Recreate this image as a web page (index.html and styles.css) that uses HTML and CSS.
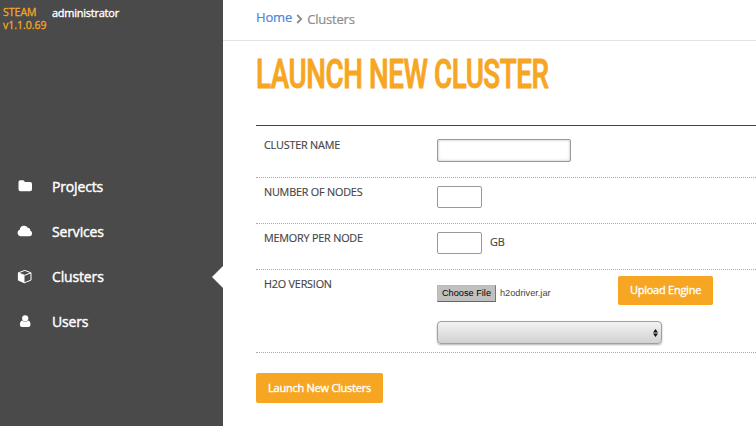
FILE: index.html
```html
<!DOCTYPE html>
<html lang="en">
<head>
<meta charset="utf-8">
<title>Steam - Launch New Cluster</title>
<link rel="stylesheet" href="styles.css">
</head>
<body>
<div class="app">
  <aside class="sidebar">
    <header class="brand">
      <div class="version">STEAM<br>v1.1.0.69</div>
      <div class="user">administrator</div>
    </header>
    <nav class="nav">
      <a class="nav-item"><svg class="icon" viewBox="0 0 16 16"><path d="M1.5 3.2Q1.5 1.2 3.3 1.2H6Q7.6 1.2 7.7 2.9H13Q15 2.9 15 4.8V10.3Q15 12.2 13 12.2H3.5Q1.5 12.2 1.5 10.3Z"/></svg><span>Projects</span></a>
      <a class="nav-item"><svg class="icon" viewBox="0 0 16 16"><path d="M4 12.2A3.3 3.3 0 0 1 2.8 5.8A4.3 4.3 0 0 1 10.8 3.8A2.5 2.5 0 0 1 13.3 6.8A2.8 2.8 0 0 1 12.8 12.2Z"/></svg><span>Services</span></a>
      <a class="nav-item active"><svg class="icon" viewBox="0 0 16 16"><path d="M1 4.1L7.5 6.6V14.2L1 11.3Z"/><path class="line" d="M1.4 3.8L7.8 1.4L14 3.8V11.1L7.7 13.7L1.4 11.1ZM1.4 3.8L7.7 6.3L14 3.8"/></svg><span>Clusters</span></a>
      <a class="nav-item"><svg class="icon" viewBox="0 0 16 16"><circle cx="8.2" cy="4.3" r="3.1"/><path d="M5.2 6.6Q8.2 9.1 11.2 6.6Q13.5 7.3 13.5 10.8Q13.5 13 11.3 13H5Q2.9 13 2.9 10.8Q2.9 7.3 5.2 6.6Z"/></svg><span>Users</span></a>
    </nav>
  </aside>
  <main class="main">
    <div class="breadcrumb">
      <a class="home">Home</a>
      <svg class="chevron" viewBox="0 0 7 10"><path d="M1.2 1L5.2 5L1.2 9"/></svg>
      <span class="current">Clusters</span>
    </div>
    <h1 class="title"><span>LAUNCH NEW CLUSTER</span></h1>
    <form class="form">
      <div class="row row-name"><label>CLUSTER NAME</label><div class="field"><input class="text-name" type="text"></div></div>
      <div class="row"><label>NUMBER OF NODES</label><div class="field"><input class="text-small" type="text"></div></div>
      <div class="row"><label>MEMORY PER NODE</label><div class="field"><input class="text-small" type="text"><span class="unit">GB</span></div></div>
      <div class="row row-version"><label>H2O VERSION</label>
        <div class="version-fields">
          <div class="upload">
            <button class="choose" type="button">Choose File</button><span class="filename">h2odriver.jar</span>
            <button class="btn btn-upload" type="button">Upload Engine</button>
          </div>
          <div class="select"><svg class="arrows" viewBox="0 0 5 8"><path d="M0 3.4L2.5 0L5 3.4ZM0 4.6H5L2.5 8Z"/></svg></div>
        </div>
      </div>
      <button class="btn btn-launch" type="button">Launch New Clusters</button>
    </form>
  </main>
</div>
</body>
</html>
```
FILE: styles.css
```css
* { box-sizing: border-box; }
body {
  margin: 0;
  font-family: "Open Sans", "Noto Sans", sans-serif;
  color: #444;
  background: #fff;
  overflow: hidden;
}
button, input { font-family: inherit; margin: 0; }
.app { display: flex; width: 756px; height: 426px; }

.sidebar { width: 223px; flex: none; background: #4a4a4a; color: #fff; }
.brand { display: flex; height: 164px; padding: 6px 0 0 3px; }
.version { width: 49px; flex: none; font-size: 10.5px; line-height: 13px; color: #f6a623; white-space: nowrap; -webkit-text-stroke: 0.3px; }
.user { font-size: 11px; line-height: 14px; letter-spacing: -0.25px; -webkit-text-stroke: 0.35px; }
.nav-item { position: relative; display: flex; align-items: center; height: 45px; padding-left: 17px; font-size: 14px; letter-spacing: -0.15px; -webkit-text-stroke: 0.4px; }
.icon { width: 16px; height: 16px; margin-right: 19px; fill: #fff; }
.icon .line { fill: none; stroke: #fff; stroke-width: 1; }
.active::after { content: ""; position: absolute; right: 0; top: 12px; border: 11px solid transparent; border-left: 0; border-right-color: #fff; }

.main { flex: 1; min-width: 0; }
.breadcrumb { display: flex; height: 41px; padding: 8px 0 0 33px; border-bottom: 1px solid #e4e4e4; font-size: 13px; line-height: 18px; }
.home { color: #4a86dc; letter-spacing: -0.15px; -webkit-text-stroke: 0.2px; }
.chevron { width: 7px; height: 10px; margin: 6px 4px 0 4px; fill: none; stroke: #8c8c8c; stroke-width: 1.8; }
.current { color: #8c8c8c; padding-top: 2px; letter-spacing: -0.2px; -webkit-text-stroke: 0.2px; }
.title { height: 84px; margin: 0; padding: 8px 0 0 33px; font: 500 41px/50px Roboto, sans-serif; color: #f6a623; white-space: nowrap; }
.title span { display: inline-block; transform: scaleX(0.676); transform-origin: 0 0; letter-spacing: -0.6px; -webkit-text-stroke: 1px; }

.form { margin-left: 33px; border-top: 1px solid #444; }
.row { display: flex; height: 46px; padding-left: 8px; border-bottom: 1px dotted #aaa; }
.row label { width: 173px; flex: none; padding-top: 6px; font-size: 10.8px; line-height: 15px; letter-spacing: -0.19px; -webkit-text-stroke: 0.15px; }
.row-name { height: 52px; }
.row-name label { padding-top: 11px; }
.field { display: flex; align-items: flex-start; padding-top: 8px; }
.row-name .field { padding-top: 13px; }
.text-name, .text-small { border: 1px solid #999; border-radius: 2px; background: #fff; padding: 0 4px; }
.text-name { width: 134px; height: 23px; box-shadow: inset 0 0 3px #bbb; }
.text-small { width: 45px; height: 22px; }
.unit { margin-left: 8px; padding-top: 2px; font-size: 10.8px; line-height: 15px; letter-spacing: -0.19px; -webkit-text-stroke: 0.15px; }
.row-version { height: 83px; }
.upload { display: flex; height: 51px; padding-top: 6px; font-family: "Liberation Sans", Arial, sans-serif; font-size: 9.4px; }
.choose { width: 59px; height: 17px; margin-top: 9px; padding: 0 0 1px; border: 1px solid #bbb; border-right-color: #777; border-bottom-color: #666; background: #c0c0c0; color: #000; font-size: 9.2px; line-height: 13px; }
.filename { width: 122px; padding: 10px 0 0 4px; font-size: 9.2px; line-height: 15px; }
.btn { border: 0; border-radius: 2px; background: #f6a623; color: #fff; font-size: 11px; letter-spacing: -0.25px; padding: 0 0 2px; -webkit-text-stroke: 0.35px; white-space: nowrap; }
.btn-upload { width: 95px; height: 29px; font-family: "Open Sans", sans-serif; }
.select { display: flex; align-items: center; justify-content: flex-end; width: 225px; height: 23px; padding-right: 3px; border: 1px solid #a0a0a0; border-radius: 4px; background: linear-gradient(#f2f2f2, #d2d2d2); box-shadow: 0 1px 2px rgba(0, 0, 0, 0.3); }
.arrows { width: 5px; height: 8px; fill: #111; }
.btn-launch { display: block; width: 127px; height: 30px; margin-top: 20px; }
```
